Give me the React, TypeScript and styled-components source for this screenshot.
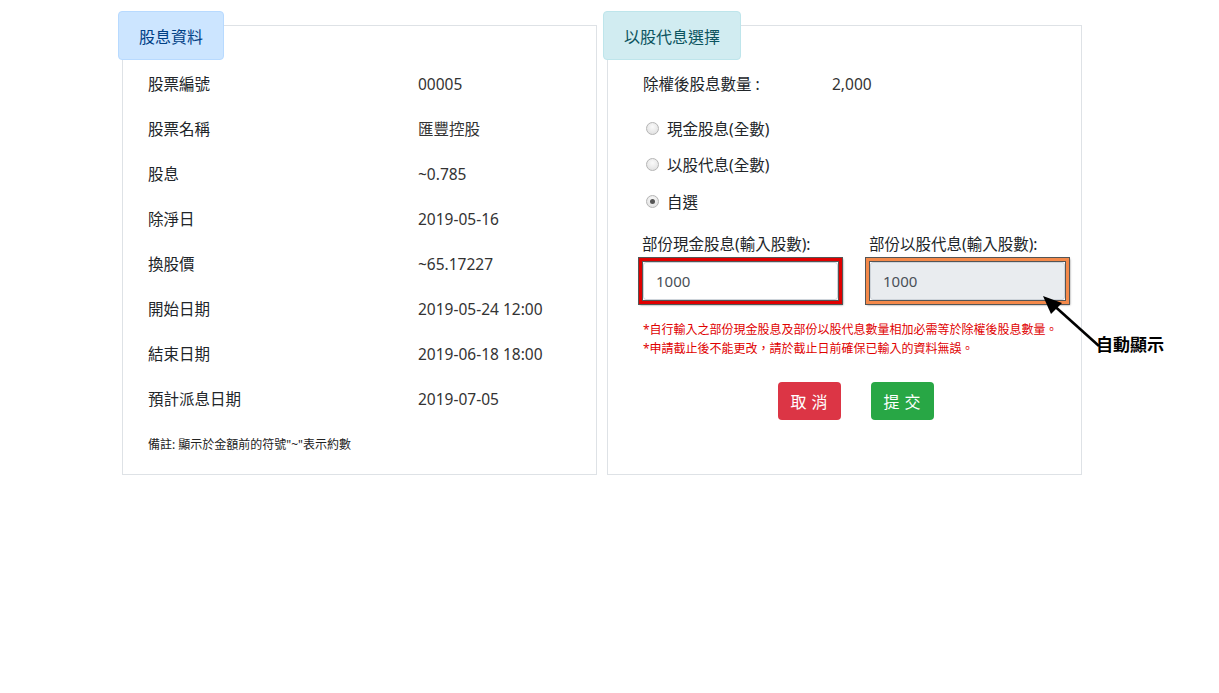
import React, { useState } from 'react';
import styled, { createGlobalStyle } from 'styled-components';

const Global = createGlobalStyle`
  html, body { margin: 0; padding: 0; background: #fff; }
  body {
    font-family: "Noto Sans", "Noto Sans CJK TC", sans-serif;
    color: #212529;
    font-size: 16px;
  }
  * { box-sizing: border-box; }
`;

const Page = styled.div`
  display: flex;
  gap: 10px;
  padding: 25px 0 0 122px;
  height: 693px;
`;

const Panel = styled.section<{ $tone: 'primary' | 'info' }>`
  position: relative;
  width: 475px;
  height: 450px;
  border: 1px solid #dee2e6;
  padding: ${p => (p.$tone === 'primary' ? '35px 20px 0 25px' : '35px 15px 0 35px')};
`;

const Tab = styled.div<{ $tone: 'primary' | 'info' }>`
  position: absolute;
  left: -5px;
  top: -15px;
  height: 49px;
  padding: 0 20px;
  display: flex;
  align-items: center;
  border-radius: 4px;
  font-size: 16px;
  background: ${p => (p.$tone === 'primary' ? '#cce5ff' : '#d1ecf1')};
  border: 1px solid ${p => (p.$tone === 'primary' ? '#b8daff' : '#bee5eb')};
  color: ${p => (p.$tone === 'primary' ? '#004085' : '#0c5460')};
`;

const InfoRow = styled.div`
  display: grid;
  grid-template-columns: 270px 1fr;
  align-items: center;
  height: 45px;
  font-size: 15.5px;
`;

const Value = styled.span`
  color: #333;
`;

const Remark = styled.p`
  margin: 14px 0 0;
  font-size: 12px;
  color: #222;
`;

const SummaryRow = styled.div`
  display: grid;
  grid-template-columns: 189px 1fr;
  align-items: center;
  height: 45px;
  font-size: 15.5px;
`;

const RadioList = styled.div`
  display: flex;
  flex-direction: column;
  padding-top: 4px;
`;

const RadioLine = styled.label`
  display: flex;
  align-items: center;
  gap: 8px;
  height: 36.5px;
  font-size: 15.5px;
  cursor: pointer;
`;

const Radio = styled.input.attrs({ type: 'radio' })`
  appearance: none;
  margin: 0 0 0 3px;
  width: 13px;
  height: 13px;
  border-radius: 50%;
  border: 1px solid #b5b5b5;
  background: radial-gradient(circle at 50% 35%, #fafafa, #dcdcdc);
  position: relative;
  &:checked::after {
    content: '';
    position: absolute;
    left: 3px;
    top: 3px;
    width: 5px;
    height: 5px;
    border-radius: 50%;
    background: #555;
  }
`;

const Fields = styled.div`
  display: grid;
  grid-template-columns: 195px 195px;
  column-gap: 32px;
  margin-top: 12px;
`;

const Field = styled.div`
  display: flex;
  flex-direction: column;
  gap: 7px;
`;

const FieldLabel = styled.span`
  font-size: 15.5px;
  margin-left: -1px;
`;

// the coloured frame is the screenshot's annotation round the input
const Frame = styled.div<{ $color: string }>`
  margin: -4px;
  border: 3px solid ${p => p.$color};
  outline: 1px solid #555;
  box-shadow: 1px 1px 2px rgba(0, 0, 0, 0.5), inset 0 0 0 1px #555;
  padding: 1px;
`;

const Input = styled.input`
  display: block;
  width: 100%;
  height: 38px;
  padding: 0 12px;
  border: 1px solid #ced4da;
  border-radius: 3px;
  font-family: "Noto Sans", sans-serif;
  font-size: 15px;
  color: #495057;
  background: ${p => (p.readOnly ? '#e9ecef' : '#fff')};
  outline: none;
`;

const Notes = styled.div`
  margin-top: 21px;
  display: flex;
  flex-direction: column;
  gap: 2px;
  font-size: 12px;
  color: #e00000;
  line-height: 17px;
`;

const Actions = styled.div`
  display: flex;
  justify-content: center;
  gap: 30px;
  width: 425px;
  margin-top: 25px;
`;

const Button = styled.button<{ $color: string }>`
  width: 63px;
  height: 38px;
  border: none;
  border-radius: 4px;
  background: ${p => p.$color};
  color: #fff;
  font-family: "Noto Sans CJK TC", sans-serif;
  font-size: 16px;
  letter-spacing: 5px;
  padding: 0 0 0 5px;
  cursor: pointer;
`;

const Callout = styled.div`
  position: absolute;
  left: 432px;
  top: 266px;
  display: flex;
  align-items: flex-end;
  pointer-events: none;
`;

const CalloutText = styled.span`
  font-family: "Noto Sans CJK TC", sans-serif;
  font-weight: 700;
  font-size: 17px;
  color: #000;
  margin: 0 0 -8px -6px;
  white-space: nowrap;
`;

const info: [string, string][] = [
  ['股票編號', '00005'],
  ['股票名稱', '匯豐控股'],
  ['股息', '~0.785'],
  ['除淨日', '2019-05-16'],
  ['換股價', '~65.17227'],
  ['開始日期', '2019-05-24 12:00'],
  ['結束日期', '2019-06-18 18:00'],
  ['預計派息日期', '2019-07-05'],
];

const options = ['現金股息(全數)', '以股代息(全數)', '自選'];

export default function App() {
  const [choice, setChoice] = useState('自選');
  const [cash, setCash] = useState('1000');
  return (
    <>
      <Global />
      <Page>
        <Panel $tone="primary">
          <Tab $tone="primary">股息資料</Tab>
          {info.map(([k, v]) => (
            <InfoRow key={k}>
              <span>{k}</span>
              <Value>{v}</Value>
            </InfoRow>
          ))}
          <Remark>備註: 顯示於金額前的符號"~"表示約數</Remark>
        </Panel>

        <Panel $tone="info">
          <Tab $tone="info">以股代息選擇</Tab>
          <SummaryRow>
            <span>除權後股息數量 :</span>
            <Value>2,000</Value>
          </SummaryRow>
          <RadioList>
            {options.map(o => (
              <RadioLine key={o}>
                <Radio name="opt" checked={choice === o} onChange={() => setChoice(o)} />
                {o}
              </RadioLine>
            ))}
          </RadioList>
          <Fields>
            <Field>
              <FieldLabel>部份現金股息(輸入股數):</FieldLabel>
              <Frame $color="#e00000">
                <Input value={cash} onChange={e => setCash(e.target.value)} />
              </Frame>
            </Field>
            <Field>
              <FieldLabel>部份以股代息(輸入股數):</FieldLabel>
              <Frame $color="#f4894a">
                <Input value={String(2000 - Number(cash || 0))} readOnly />
              </Frame>
            </Field>
          </Fields>
          <Notes>
            <span>*自行輸入之部份現金股息及部份以股代息數量相加必需等於除權後股息數量。</span>
            <span>*申請截止後不能更改，請於截止日前確保已輸入的資料無誤。</span>
          </Notes>
          <Actions>
            <Button $color="#dc3545">取消</Button>
            <Button $color="#28a745">提交</Button>
          </Actions>
          <Callout>
            <svg width="62" height="56" viewBox="0 0 62 56">
              <line x1="10" y1="10" x2="59" y2="54" stroke="#000" strokeWidth="2.6" />
              <polygon points="3,4 22,11 11,22" fill="#000" />
            </svg>
            <CalloutText>自動顯示</CalloutText>
          </Callout>
        </Panel>
      </Page>
    </>
  );
}
